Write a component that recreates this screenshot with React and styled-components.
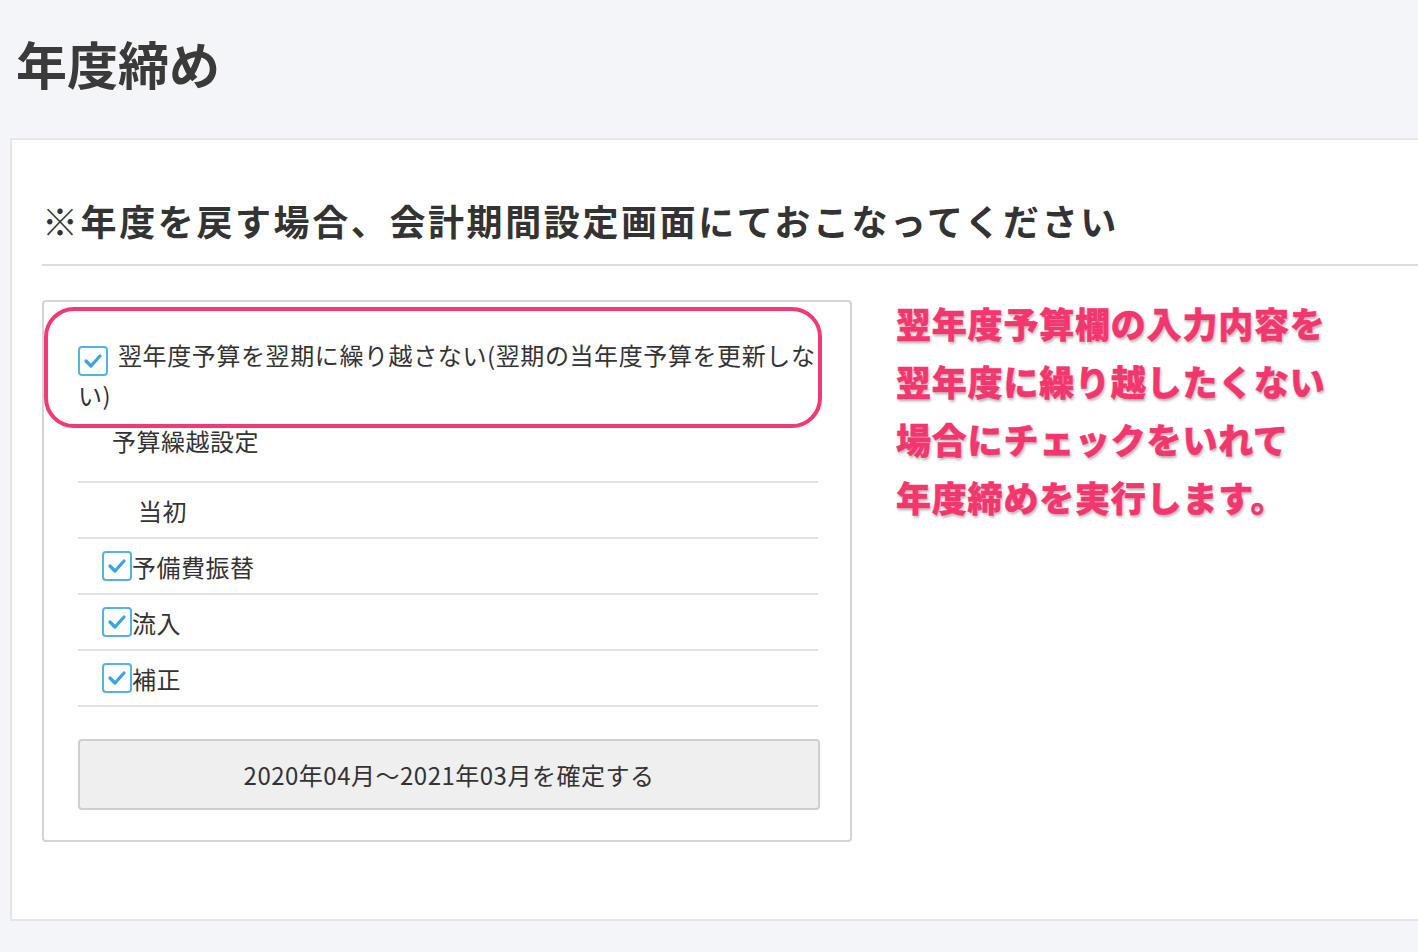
import React from 'react'
import styled, { createGlobalStyle } from 'styled-components'

const Global = createGlobalStyle`
  body {
    margin: 0;
    background: #f4f5f8;
    font-family: "Noto Sans CJK JP", "Noto Sans", sans-serif;
    color: #333;
    overflow: hidden;
  }
`

const Title = styled.h1`
  margin: 0;
  padding: 28px 0 0 16px;
  height: 138px;
  box-sizing: border-box;
  font-size: 51px;
  line-height: 70px;
  font-weight: 700;
  color: #3a3a3a;
`

const Card = styled.div`
  margin-left: 10px;
  margin-right: -20px;
  height: 783px;
  box-sizing: border-box;
  background: #fff;
  border: 2px solid #e4e5e8;
  padding: 52px 0 0 30px;
`

const Heading = styled.h2`
  margin: 0;
  font-size: 36px;
  line-height: 56px;
  font-weight: 700;
  letter-spacing: 2.6px;
  color: #333;
  padding-bottom: 16px;
  border-bottom: 2px solid #dcdcdc;
`

const Body = styled.div`
  display: flex;
  margin-top: 34px;
  gap: 44px;
`

const Panel = styled.div`
  position: relative;
  width: 810px;
  height: 542px;
  box-sizing: border-box;
  border: 2px solid #d4d4d4;
  border-radius: 4px;
  padding: 34px 32px 0 34px;
`

const Highlight = styled.div`
  position: absolute;
  left: 0;
  top: 5px;
  width: 778px;
  height: 121px;
  box-sizing: border-box;
  border: 4px solid #f23a72;
  border-radius: 30px;
  pointer-events: none;
`

const MainLabel = styled.div`
  font-size: 24px;
  line-height: 37px;
  letter-spacing: 0.6px;
  color: #333;
`

const Box = styled.span`
  display: inline-flex;
  vertical-align: -4px;
  width: 30px;
  height: 30px;
  box-sizing: border-box;
  border: 2px solid #56b2e4;
  border-radius: 4px;
  margin-right: ${p => p.gap || 0}px;
  align-items: center;
  justify-content: center;
  background: #fff;
`

const Check = ({ gap }) => (
  <Box gap={gap}>
    <svg width="20" height="16" viewBox="0 0 20 16">
      <path d="M3 8 L8 13 L17 3" fill="none" stroke="#3aa4dd" strokeWidth="3.2" strokeLinecap="round" strokeLinejoin="round" />
    </svg>
  </Box>
)

const Table = styled.div`
  margin-top: 10px;
`

const Row = styled.div`
  height: 56px;
  box-sizing: border-box;
  display: flex;
  align-items: center;
  padding-left: ${p => p.indent}px;
  border-bottom: 2px solid #e2e2e2;
  font-size: 24px;
  letter-spacing: 0.5px;
  color: #333;
`

const HeadRow = styled(Row)`
  height: 60px;
  align-items: flex-start;
`

const Button = styled.button`
  margin-top: 32px;
  width: 742px;
  height: 71px;
  background: #efefef;
  border: 2px solid #cfcfcf;
  border-radius: 4px;
  font-family: inherit;
  font-size: 24px;
  letter-spacing: 0.5px;
  color: #333;
`

const Note = styled.div`
  margin-top: -6px;
  font-size: 35px;
  line-height: 58px;
  font-weight: 900;
  letter-spacing: 0.8px;
  color: #f2376f;
  text-shadow: 0 0 2px #fff, 1px 2px 3px rgba(0, 0, 0, 0.35);
  -webkit-text-stroke: 0.5px #f2376f;
`

export default function App() {
  return (
    <>
      <Global />
      <Title>年度締め</Title>
      <Card>
        <Heading>※年度を戻す場合、会計期間設定画面にておこなってください</Heading>
        <Body>
          <Panel>
            <Highlight />
            <MainLabel>
              <Check gap={10} />翌年度予算を翌期に繰り越さない(翌期の当年度予算を更新しない)
            </MainLabel>
            <Table>
              <HeadRow indent={34}>予算繰越設定</HeadRow>
              <Row indent={60}>当初</Row>
              <Row indent={24}><Check />予備費振替</Row>
              <Row indent={24}><Check />流入</Row>
              <Row indent={24}><Check />補正</Row>
            </Table>
            <Button>2020年04月〜2021年03月を確定する</Button>
          </Panel>
          <Note>
            翌年度予算欄の入力内容を<br />
            翌年度に繰り越したくない<br />
            場合にチェックをいれて<br />
            年度締めを実行します。
          </Note>
        </Body>
      </Card>
    </>
  )
}
